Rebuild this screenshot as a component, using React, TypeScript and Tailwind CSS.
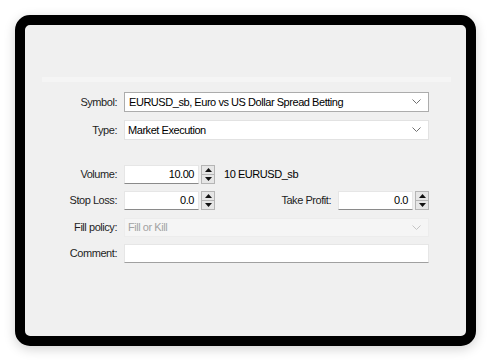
import React from "react";

const font = { fontFamily: '"Liberation Sans", Arial, sans-serif' };

function Chevron({ light }: { light?: boolean }) {
  return (
    <svg width="9" height="6" viewBox="0 0 9 6" className="shrink-0">
      <path d="M0.5 0.5 L4.5 4.5 L8.5 0.5" fill="none" stroke={light ? "#c4c4c4" : "#707070"} strokeWidth="1" />
    </svg>
  );
}

function Spin() {
  return (
    <div className="ml-[2px] flex h-full w-[14px] flex-col">
      <div className="flex h-1/2 items-center justify-center border border-[#b5b5b5] bg-[#e6e6e6]">
        <svg width="7" height="4" viewBox="0 0 7 4"><path d="M3.5 0 L7 4 L0 4 Z" fill="#111" /></svg>
      </div>
      <div className="flex h-1/2 items-center justify-center border border-t-0 border-[#b5b5b5] bg-[#e6e6e6]">
        <svg width="7" height="4" viewBox="0 0 7 4"><path d="M0 0 L7 0 L3.5 4 Z" fill="#111" /></svg>
      </div>
    </div>
  );
}

function Label({ children }: { children: React.ReactNode }) {
  return <div className="w-[99px] shrink-0 pr-[7px] text-right text-[#1e1e1e]">{children}</div>;
}

export default function App() {
  return (
    <div className="h-[361px] w-[491px] bg-white p-[15px] text-[11px] tracking-[-0.45px] text-black" style={font}>
      <div className="h-[331px] w-[461px] rounded-[15px] border-[10px] border-black bg-[#f0f0f0] pt-[52px] shadow-[0_3px_12px_rgba(0,0,0,0.18)]">
        <div className="ml-[17px] mr-[15px] h-[5px] bg-[#f5f5f5]" />
        <div className="flex flex-col pr-[37px]">
          <div className="mt-[10px] flex h-[20px] items-center">
            <Label>Symbol:</Label>
            <div className="flex h-full flex-1 items-center justify-between border border-[#acacac] bg-white pl-[4px] pr-[7px]">
              <span>EURUSD_sb, Euro vs US Dollar Spread Betting</span>
              <Chevron />
            </div>
          </div>
          <div className="mt-[8px] flex h-[20px] items-center">
            <Label>Type:</Label>
            <div className="flex h-full flex-1 items-center justify-between border border-[#e2e2e2] bg-white pl-[3px] pr-[7px]">
              <span>Market Execution</span>
              <Chevron />
            </div>
          </div>
          <div className="mt-[25px] flex h-[19px] items-center">
            <Label>Volume:</Label>
            <div className="flex h-full w-[75px] items-center justify-end border border-[#e6e6e6] border-b-[#8a8a8a] bg-white pr-[4px]">10.00</div>
            <Spin />
            <span className="ml-[9px]">10 EURUSD_sb</span>
          </div>
          <div className="mt-[7px] flex h-[19px] items-center">
            <Label>Stop Loss:</Label>
            <div className="flex h-full w-[75px] items-center justify-end border border-[#e6e6e6] border-b-[#8a8a8a] bg-white pr-[4px]">0.0</div>
            <Spin />
            <div className="flex-1 pr-[7px] text-right text-[#1e1e1e]">Take Profit:</div>
            <div className="flex h-full w-[75px] items-center justify-end border border-[#e6e6e6] border-b-[#8a8a8a] bg-white pr-[4px]">0.0</div>
            <Spin />
          </div>
          <div className="mt-[8px] flex h-[19px] items-center">
            <Label>Fill policy:</Label>
            <div className="flex h-full flex-1 items-center justify-between border border-[#ececec] bg-[#f5f5f5] pl-[3px] pr-[7px] text-[#a3a3a3]">
              <span>Fill or Kill</span>
              <Chevron light />
            </div>
          </div>
          <div className="mt-[7px] flex h-[19px] items-center">
            <Label>Comment:</Label>
            <div className="h-full flex-1 border border-[#e6e6e6] border-b-[#a0a0a0] bg-white" />
          </div>
        </div>
      </div>
    </div>
  );
}
